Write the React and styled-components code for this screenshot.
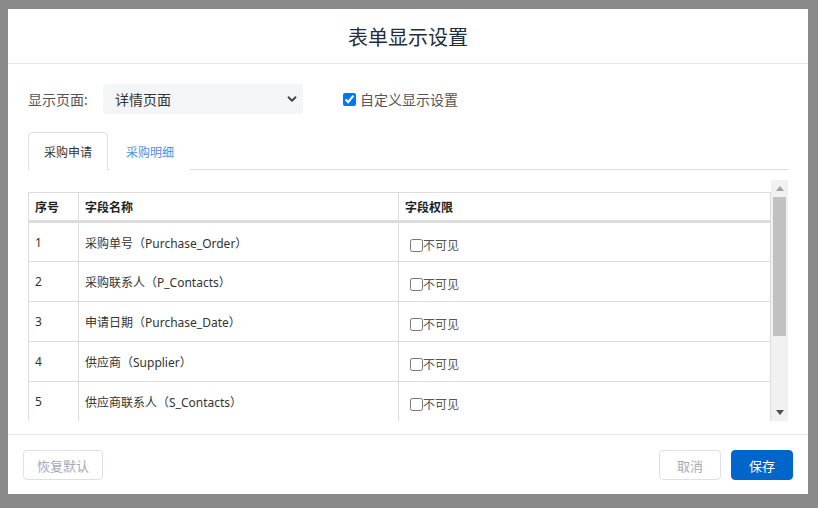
import React from "react";
import styled, { createGlobalStyle } from "styled-components";

const GlobalStyle = createGlobalStyle`
  html, body {
    margin: 0;
    padding: 0;
    background: #8a8a8a;
    font-family: "Noto Sans", "Noto Sans CJK SC", sans-serif;
  }
`;

const Overlay = styled.div`
  width: 818px;
  height: 508px;
  padding: 9px 10px 0 8px;
  box-sizing: border-box;
`;

const Modal = styled.div`
  width: 800px;
  height: 485px;
  background: #fff;
  display: flex;
  flex-direction: column;
`;

const Header = styled.div`
  height: 54px;
  border-bottom: 1px solid #e6e6ef;
  display: flex;
  align-items: center;
  justify-content: center;
  font-size: 20px;
  color: #1f2d3d;
`;

const Body = styled.div`
  flex: 1;
  padding: 20px 20px 0;
  display: flex;
  flex-direction: column;
  min-height: 0;
`;

const FilterRow = styled.div`
  display: flex;
  align-items: center;
  height: 30px;
`;

const Label = styled.span`
  font-size: 14px;
  color: #555;
  width: 75px;
`;

const SelectWrap = styled.div`
  position: relative;
  width: 200px;
  height: 30px;
  & svg {
    position: absolute;
    right: 4px;
    top: 8px;
    pointer-events: none;
  }
`;

const Select = styled.select`
  appearance: none;
  width: 100%;
  height: 100%;
  border: none;
  border-radius: 3px;
  background: #f4f5f8;
  padding: 0 12px;
  font-family: inherit;
  font-size: 14px;
  color: #333;
  outline: none;
`;

const CheckLabel = styled.label`
  display: flex;
  align-items: center;
  margin-left: 40px;
  font-size: 14px;
  color: #555;
  & input {
    margin: 0 4px 0 0;
    width: 13px;
    height: 13px;
  }
`;

const Tabs = styled.div`
  display: flex;
  gap: 2px;
  margin-top: 18px;
  border-bottom: 1px solid #dcdcdc;
  height: 38px;
  box-sizing: border-box;
`;

const Tab = styled.div`
  padding: 0 15px;
  display: flex;
  align-items: center;
  font-size: 12px;
  color: ${(p) => (p.active ? "#333" : "#4a90e2")};
  border: 1px solid ${(p) => (p.active ? "#e0e0e0" : "transparent")};
  border-bottom: none;
  border-radius: 4px 4px 0 0;
  background: #fff;
  margin-bottom: -1px;
`;

const ScrollArea = styled.div`
  margin-top: 10px;
  height: 241px;
  display: flex;
`;

const Viewport = styled.div`
  flex: 1;
  overflow: hidden;
  padding-top: 12px;
`;

const ScrollBar = styled.div`
  width: 17px;
  background: #f1f1f1;
  display: flex;
  flex-direction: column;
`;

const Arrow = styled.div`
  height: 17px;
  display: flex;
  align-items: center;
  justify-content: center;
`;

const Track = styled.div`
  flex: 1;
  padding: 0 2px;
`;

const Thumb = styled.div`
  height: 139px;
  background: #c1c1c1;
`;

const Table = styled.table`
  width: 100%;
  table-layout: fixed;
  border-collapse: collapse;
  font-size: 12px;
  color: #333;
`;

const Th = styled.th`
  box-sizing: border-box;
  height: 29px;
  text-align: left;
  padding: 0 6px;
  font-weight: bold;
  color: #222;
  border: 1px solid #dcdcdc;
  border-bottom: 3px solid #dcdcdc;
  width: ${(p) => p.w || "auto"};
`;

const Td = styled.td`
  height: 40px;
  vertical-align: top;
  padding: 11px 6px 0;
  border: 1px solid #dcdcdc;
  box-sizing: border-box;
  white-space: nowrap;
`;

const Perm = styled.label`
  display: inline-flex;
  align-items: center;
  margin: 2px 0 0 5px;
  color: #555;
  & input {
    margin: 0;
    width: 13px;
    height: 13px;
  }
`;

const Footer = styled.div`
  margin-top: 11px;
  border-top: 1px solid #e6e6ef;
  padding: 15px 15px 0;
  height: 60px;
  box-sizing: border-box;
  display: flex;
  align-items: flex-start;
  gap: 10px;
`;

const Spacer = styled.div`
  flex: 1;
`;

const Button = styled.button`
  height: 30px;
  padding: 0;
  width: ${(p) => p.w || 62}px;
  border-radius: 4px;
  font-family: inherit;
  font-size: 13px;
  border: 1px solid ${(p) => (p.primary ? "#0066cc" : "#dcdfe6")};
  background: ${(p) => (p.primary ? "#0066cc" : "#fff")};
  color: ${(p) => (p.primary ? "#fff" : "#a3aab8")};
`;

const rows = [
  "采购单号（Purchase_Order）",
  "采购联系人（P_Contacts）",
  "申请日期（Purchase_Date）",
  "供应商（Supplier）",
  "供应商联系人（S_Contacts）",
];

const Chevron = () => (
  <svg width="14" height="14" viewBox="0 0 24 24" fill="none" stroke="#444" strokeWidth="3.2" strokeLinecap="round" strokeLinejoin="round">
    <path d="M6 9l6 6 6-6" />
  </svg>
);

const Triangle = ({ up, color }) => (
  <svg width="8" height="5" viewBox="0 0 8 5">
    <polygon points={up ? "4,0 8,5 0,5" : "0,0 8,0 4,5"} fill={color} />
  </svg>
);

export default function App() {
  return (
    <>
      <GlobalStyle />
      <Overlay>
        <Modal>
          <Header>表单显示设置</Header>
          <Body>
            <FilterRow>
              <Label>显示页面:</Label>
              <SelectWrap>
                <Select defaultValue="detail">
                  <option value="detail">详情页面</option>
                  <option value="edit">编辑页面</option>
                </Select>
                <Chevron />
              </SelectWrap>
              <CheckLabel>
                <input type="checkbox" defaultChecked />
                自定义显示设置
              </CheckLabel>
            </FilterRow>
            <Tabs>
              <Tab active>采购申请</Tab>
              <Tab>采购明细</Tab>
            </Tabs>
            <ScrollArea>
              <Viewport>
                <Table>
                  <thead>
                    <tr>
                      <Th w="50px">序号</Th>
                      <Th w="320px">字段名称</Th>
                      <Th>字段权限</Th>
                    </tr>
                  </thead>
                  <tbody>
                    {rows.map((name, i) => (
                      <tr key={name}>
                        <Td>{i + 1}</Td>
                        <Td>{name}</Td>
                        <Td>
                          <Perm>
                            <input type="checkbox" />
                            不可见
                          </Perm>
                        </Td>
                      </tr>
                    ))}
                  </tbody>
                </Table>
              </Viewport>
              <ScrollBar>
                <Arrow>
                  <Triangle up color="#a3a3a3" />
                </Arrow>
                <Track>
                  <Thumb />
                </Track>
                <Arrow>
                  <Triangle color="#505050" />
                </Arrow>
              </ScrollBar>
            </ScrollArea>
          </Body>
          <Footer>
            <Button w={80}>恢复默认</Button>
            <Spacer />
            <Button>取消</Button>
            <Button primary>保存</Button>
          </Footer>
        </Modal>
      </Overlay>
    </>
  );
}
